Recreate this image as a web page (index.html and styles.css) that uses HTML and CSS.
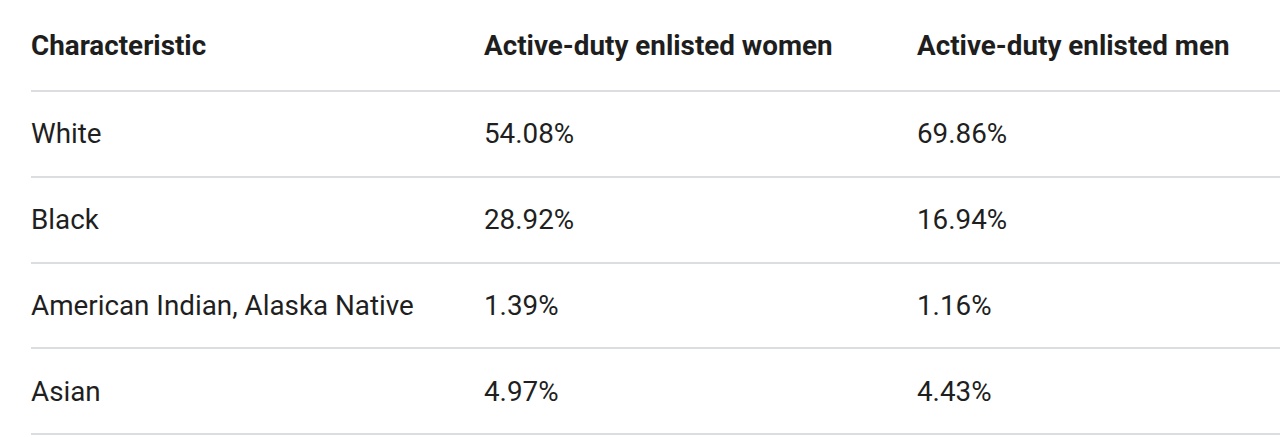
FILE: index.html
```html
<!DOCTYPE html>
<html>
<head>
<meta charset="utf-8">
<link rel="stylesheet" href="styles.css">
</head>
<body>
<div class="wrap">
<table class="data">
  <colgroup>
    <col class="c1"><col class="c2"><col class="c3">
  </colgroup>
  <thead>
    <tr><th>Characteristic</th><th>Active-duty enlisted women</th><th>Active-duty enlisted men</th></tr>
  </thead>
  <tbody>
    <tr><td>White</td><td>54.08%</td><td>69.86%</td></tr>
    <tr><td>Black</td><td>28.92%</td><td>16.94%</td></tr>
    <tr><td>American Indian, Alaska Native</td><td>1.39%</td><td>1.16%</td></tr>
    <tr><td>Asian</td><td>4.97%</td><td>4.43%</td></tr>
  </tbody>
</table>
</div>
</body>
</html>
```

FILE: styles.css
```css
html, body {
  margin: 0;
  padding: 0;
  background: #ffffff;
  overflow: hidden;
}
.wrap {
  padding-left: 31px;
}
.data {
  border-collapse: collapse;
  table-layout: fixed;
  width: 100%;
  font-family: Roboto, "Liberation Sans", sans-serif;
  color: #1f1f1f;
}
.c1 { width: 453px; }
.c2 { width: 433px; }
.c3 { width: auto; }
.data th {
  height: 90px;
  font-size: 27.8px;
  font-weight: 700;
  text-align: left;
  padding: 0;
  vertical-align: middle;
  border-bottom: 2px solid #dcdde1;
  color: #1e1e1e;
}
.data td {
  height: 83.8px;
  font-size: 27.8px;
  font-weight: 400;
  padding: 0;
  vertical-align: middle;
  border-bottom: 2px solid #dcdde1;
}
```
